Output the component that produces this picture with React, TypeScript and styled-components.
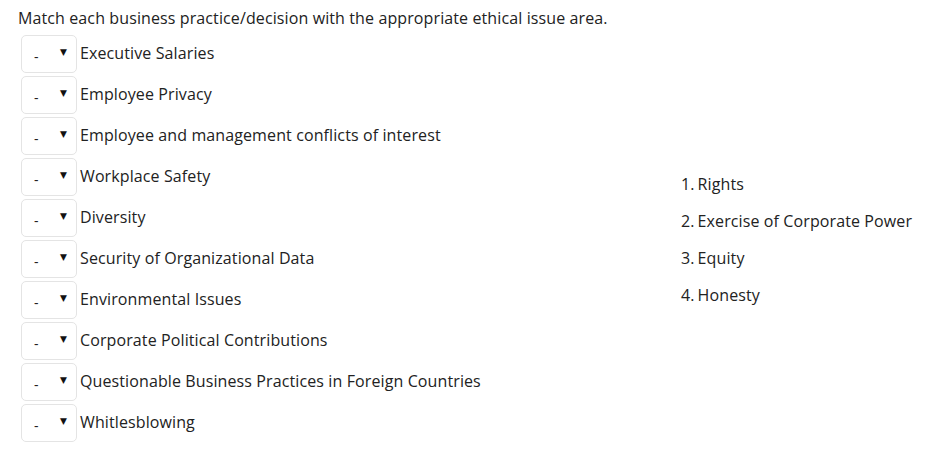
import React from 'react'
import styled, { createGlobalStyle } from 'styled-components'

const GlobalStyle = createGlobalStyle`
  body {
    margin: 0;
    background: #fff;
    font-family: "Open Sans", "Liberation Sans", sans-serif;
    color: #222;
  }
`

const practices = [
  'Executive Salaries',
  'Employee Privacy',
  'Employee and management conflicts of interest',
  'Workplace Safety',
  'Diversity',
  'Security of Organizational Data',
  'Environmental Issues',
  'Corporate Political Contributions',
  'Questionable Business Practices in Foreign Countries',
  'Whitlesblowing',
]

const areas = ['Rights', 'Exercise of Corporate Power', 'Equity', 'Honesty']

function App() {
  return (
    <Page>
      <GlobalStyle />
      <Prompt>Match each business practice/decision with the appropriate ethical issue area.</Prompt>
      <Columns>
        <PracticeList>
          {practices.map(p => (
            <PracticeRow key={p}>
              <SelectWrap>
                <Select defaultValue="-">
                  <option value="-">-</option>
                  <option value="1">1</option>
                  <option value="2">2</option>
                  <option value="3">3</option>
                  <option value="4">4</option>
                </Select>
              </SelectWrap>
              <Label>{p}</Label>
            </PracticeRow>
          ))}
        </PracticeList>
        <AreaList>
          {areas.map((a, i) => (
            <AreaItem key={a}>
              <Num>{i + 1}.</Num>
              {a}
            </AreaItem>
          ))}
        </AreaList>
      </Columns>
    </Page>
  )
}

const Page = styled.div`
  padding: 7px 0 0 18px;
  font-size: 16px;
  letter-spacing: 0.11px;
`

const Prompt = styled.p`
  margin: 0 0 6px 0;
  line-height: 22px;
  font-size: 16px;
`

const Columns = styled.div`
  display: flex;
  align-items: center;
`

const PracticeList = styled.div`
  display: flex;
  flex-direction: column;
  gap: 3px;
  width: 660px;
  padding-left: 3px;
`

const PracticeRow = styled.div`
  display: flex;
  align-items: center;
  gap: 3px;
`

const SelectWrap = styled.span`
  position: relative;
  display: inline-block;
  width: 56px;
  height: 38px;
  &::after {
    content: '▼';
    position: absolute;
    right: 10px;
    top: 12px;
    font-size: 9px;
    color: #111;
    pointer-events: none;
    font-family: "DejaVu Sans", sans-serif;
  }
`

const Select = styled.select`
  appearance: none;
  -webkit-appearance: none;
  box-sizing: border-box;
  width: 100%;
  height: 100%;
  border: 1px solid #e4e4e4;
  border-radius: 5px;
  background: #fff;
  padding: 4px 0 0 12px;
  font-family: "Open Sans", "Liberation Sans", sans-serif;
  font-size: 14px;
  color: #222;
  outline: none;
`

const Label = styled.span`
  line-height: 22px;
  margin-top: -2px;
`

const AreaList = styled.ol`
  list-style: none;
  margin: 0;
  padding: 2px 0 0 0;
  display: flex;
  flex-direction: column;
  gap: 15px;
`

const AreaItem = styled.li`
  line-height: 22px;
`

const Num = styled.span`
  margin-right: 3px;
`

export default App
